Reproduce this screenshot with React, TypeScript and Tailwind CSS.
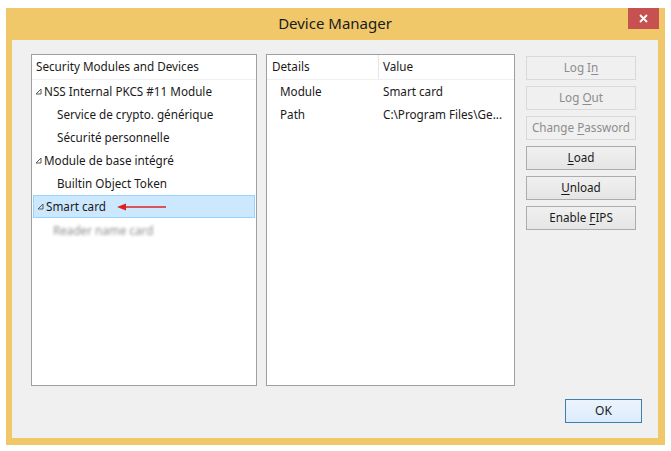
import React from 'react';

const font = { fontFamily: '"Noto Sans", "Open Sans", sans-serif' };

function Tri() {
    return (
        <svg width="7" height="7" viewBox="0 0 7 7" className="mr-[2px] shrink-0">
            <path d="M6 1 L6 6 L1 6 Z" fill="none" stroke="#595959" strokeWidth="1" />
        </svg>
    );
}

function TreeRow({ label, level, open, selected, children }: { label: string; level: number; open?: boolean; selected?: boolean; children?: React.ReactNode }) {
    return (
        <div
            className={`relative flex items-center h-[23px] ${selected ? 'bg-[#cce8ff] border border-[#99d1ff] mx-[1px]' : ''}`}
        >
            <div className={`flex items-center ${level === 0 ? 'pl-[3px]' : 'pl-[25px]'}`}>
                {open && <Tri />}
                <span className="text-[11.7px] text-[#1a1a1a]">{label}</span>
            </div>
            {children}
        </div>
    );
}

function Btn({ label, u, disabled, idx }: { label: string; u: string; disabled?: boolean; idx: number }) {
    const before = label.slice(0, idx);
    const after = label.slice(idx + u.length);
    return (
        <button
            className={`h-[24px] w-[110px] flex items-center justify-center text-[11.7px] border ${
                disabled
                    ? 'border-[#d9d9d9] bg-[#f0f0f0] text-[#8c8c8c]'
                    : 'border-[#acacac] bg-gradient-to-b from-[#f0f0f0] to-[#e5e5e5] text-[#1a1a1a]'
            }`}
        >
            <span className="whitespace-pre">
                {before}
                <span className="underline underline-offset-2">{u}</span>
                {after}
            </span>
        </button>
    );
}

export default function App() {
    return (
        <div className="w-[671px] h-[451px] bg-white pt-[8px] pl-[6px]" style={font}>
            <div className="w-[659px] h-[437px] bg-[#f0c869] flex flex-col px-[6px] pb-[7px] pr-[7px]">
                {/* Title bar */}
                <div className="relative h-[32px] flex items-center justify-center">
                    <span className="text-[15px] text-[#1a1a1a] mt-[-1px]">Device Manager</span>
                    <div className="absolute right-[-1px] top-0 w-[31px] h-[21px] bg-[#c75050] flex items-center justify-center">
                        <svg width="9" height="9" viewBox="0 0 9 9">
                            <path d="M1 1 L8 8 M8 1 L1 8" stroke="#ffffff" strokeWidth="1.8" />
                        </svg>
                    </div>
                </div>

                {/* Client area */}
                <div className="flex-1 bg-[#f0f0f0] flex flex-col pl-[19px] pt-[14px]">
                    <div className="flex">
                        {/* Tree panel */}
                        <div className="w-[226px] h-[332px] bg-white border border-[#9f9f9f] flex flex-col">
                            <div className="h-[25px] flex items-center pl-[4px] border-b border-[#f0f0f0]">
                                <span className="text-[11.7px] text-[#1a1a1a]">Security Modules and Devices</span>
                            </div>
                            <TreeRow label="NSS Internal PKCS #11 Module" level={0} open />
                            <TreeRow label="Service de crypto. générique" level={1} />
                            <TreeRow label="Sécurité personnelle" level={1} />
                            <TreeRow label="Module de base intégré" level={0} open />
                            <TreeRow label="Builtin Object Token" level={1} />
                            <TreeRow label="Smart card" level={0} open selected>
                                <svg width="52" height="10" viewBox="0 0 52 10" className="absolute left-[82px] top-[6px]">
                                    <path d="M8 5 L50 5" stroke="#e02020" strokeWidth="1.5" />
                                    <path d="M1 5 L10 1.5 L10 8.5 Z" fill="#e02020" />
                                </svg>
                            </TreeRow>
                            <div className="flex items-center h-[26px] pl-[21px]">
                                <span className="text-[11.7px] text-[#8f8f8f] blur-[1.4px]">Reader name card</span>
                            </div>
                        </div>

                        {/* Details panel */}
                        <div className="ml-[9px] w-[249px] h-[332px] bg-white border border-[#9f9f9f] flex flex-col">
                            <div className="h-[25px] flex items-center border-b border-[#f0f0f0]">
                                <div className="w-[112px] pl-[5px] h-full flex items-center border-r border-[#e5e5e5]">
                                    <span className="text-[11.7px] text-[#1a1a1a]">Details</span>
                                </div>
                                <span className="pl-[4px] text-[11.7px] text-[#1a1a1a]">Value</span>
                            </div>
                            {[
                                ['Module', 'Smart card'],
                                ['Path', 'C:\\Program Files\\Ge...'],
                            ].map(([k, v]) => (
                                <div key={k} className="flex items-center h-[23px]">
                                    <span className="w-[116px] pl-[13px] text-[11.7px] text-[#1a1a1a]">{k}</span>
                                    <span className="text-[11.7px] text-[#1a1a1a]">{v}</span>
                                </div>
                            ))}
                        </div>

                        {/* Buttons */}
                        <div className="ml-[11px] mt-[2px] flex flex-col gap-[6px]">
                            <Btn label="Log In" u="n" idx={5} disabled />
                            <Btn label="Log Out" u="O" idx={4} disabled />
                            <Btn label="Change Password" u="P" idx={7} disabled />
                            <Btn label="Load" u="L" idx={0} />
                            <Btn label="Unload" u="U" idx={0} />
                            <Btn label="Enable FIPS" u="F" idx={7} />
                        </div>
                    </div>

                    <div className="flex justify-end pr-[16px] mt-[13px]">
                        <button className="h-[24px] w-[77px] border border-[#3c7fb1] bg-gradient-to-b from-[#ecf4fc] to-[#dcecfc] text-[12px] text-[#1a1a1a]">
                            OK
                        </button>
                    </div>
                </div>
            </div>
        </div>
    );
}
